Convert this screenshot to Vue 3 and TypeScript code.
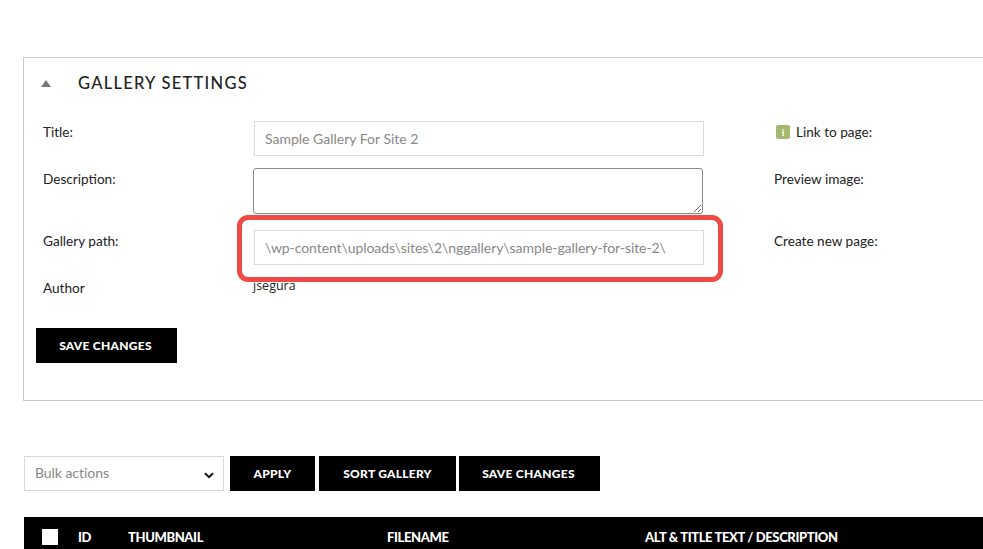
<script setup lang="ts">
const columns = [
  { label: 'ID', width: 50 },
  { label: 'THUMBNAIL', width: 259 },
  { label: 'FILENAME', width: 258 },
  { label: 'ALT & TITLE TEXT / DESCRIPTION', width: 300 },
]
</script>

<template>
  <div class="page">
    <section class="panel">
      <header class="panel-head">
        <svg class="caret" width="10" height="7" viewBox="0 0 10 7"><path d="M5 0 10 7H0Z" fill="#777" /></svg>
        <h2>GALLERY SETTINGS</h2>
      </header>

      <div class="form">
        <label class="lbl lbl-title">Title:</label>
        <div class="field"><input class="txt" value="Sample Gallery For Site 2" /></div>
        <div class="side side-link">
          <span class="info">i</span>
          <span>Link to page:</span>
        </div>

        <label class="lbl lbl-desc">Description:</label>
        <div class="field"><textarea class="area"></textarea></div>
        <div class="side side-preview">Preview image:</div>

        <label class="lbl lbl-path">Gallery path:</label>
        <div class="field path-field">
          <input class="txt path-txt" value="\wp-content\uploads\sites\2\nggallery\sample-gallery-for-site-2\" />
          <span class="callout"></span>
        </div>
        <div class="side side-create">Create new page:</div>

        <label class="lbl lbl-author">Author</label>
        <div class="author">jsegura</div>
      </div>

      <button class="btn btn-save" type="button">SAVE CHANGES</button>
    </section>

    <div class="toolbar">
      <div class="select">
        <span class="select-text">Bulk actions</span>
        <svg class="chev" width="10" height="7" viewBox="0 0 10 7"><path d="M1 1.2 5 5.2 9 1.2" fill="none" stroke="#111" stroke-width="2" /></svg>
      </div>
      <button class="btn btn-apply" type="button">APPLY</button>
      <button class="btn btn-sort" type="button">SORT GALLERY</button>
      <button class="btn btn-save2" type="button">SAVE CHANGES</button>
    </div>

    <div class="thead">
      <span class="check"></span>
      <span v-for="c in columns" :key="c.label" class="col" :style="{ width: c.width + 'px' }">{{ c.label }}</span>
    </div>
  </div>
</template>

<style>
html, body { margin: 0; background: #fff; overflow: hidden; }
</style>

<style scoped>
.page {
  width: 983px;
  height: 549px;
  overflow: hidden;
  padding-top: 57px;
  box-sizing: border-box;
  font-family: Lato, "Liberation Sans", sans-serif;
  color: #222;
}
.panel {
  margin-left: 23px;
  width: 1000px;
  height: 344px;
  box-sizing: border-box;
  border: 1px solid #c9c9c9;
  padding-top: 13px;
}
.panel-head {
  display: flex;
  align-items: center;
  height: 24px;
  padding-left: 17px;
}
.caret { margin-right: 27px; }
.panel-head h2 {
  margin: 0;
  font-size: 16.5px;
  font-weight: 500;
  letter-spacing: 1.25px;
  color: #222;
}
.form {
  display: grid;
  grid-template-columns: 211px 450px 520px;
  grid-template-rows: 35px 46px 35px 24px;
  row-gap: 12px;
  padding-left: 19px;
  margin-top: 26px;
  font-size: 13.6px;
}
.lbl { line-height: 20px; color: #222; }
.lbl-title { margin-top: 1px; }
.lbl-desc { margin-top: 1px; }
.lbl-path { margin-top: 5px; }
.lbl-author { margin-top: 5px; }
.field { position: relative; }
.txt {
  display: block;
  box-sizing: border-box;
  width: 450px;
  height: 35px;
  border: 1px solid #d8dcdc;
  padding: 0 10px;
  font: 14px Lato, sans-serif;
  color: #888;
  outline: none;
  background: #fff;
}
.path-txt { letter-spacing: -0.07px; }
.area {
  display: block;
  box-sizing: border-box;
  width: 450px;
  height: 46px;
  margin-left: -1px;
  border: 1px solid #8a8a8a;
  border-radius: 3px;
  background: #fff;
  outline: none;
  resize: vertical;
}
.path-field { margin-top: 4px; }
.callout {
  position: absolute;
  left: -17px;
  top: -15px;
  width: 486px;
  height: 67px;
  border: 5px solid #ef4a45;
  border-radius: 11px;
  box-sizing: border-box;
  pointer-events: none;
}
.side {
  padding-left: 70px;
  line-height: 20px;
  color: #222;
}
.side-link {
  display: flex;
  align-items: center;
  margin-top: 1px;
  height: 20px;
  padding-left: 72px;
  gap: 6px;
}
.info {
  width: 14px;
  height: 14px;
  border-radius: 2px;
  background: #a3b96f;
  color: #fff;
  font: bold 10px/14px Lato, sans-serif;
  text-align: center;
}
.side-preview { margin-top: 1px; }
.side-create { margin-top: 5px; }
.author {
  grid-column: 2;
  margin-left: -1px;
  margin-top: 3px;
  line-height: 20px;
  color: #222;
  font-family: "Open Sans", sans-serif;
  font-size: 12.5px;
}
.btn {
  display: block;
  box-sizing: border-box;
  height: 35px;
  border: 0;
  padding: 0;
  background: #000;
  color: #fff;
  font: 900 12px Lato, sans-serif;
  letter-spacing: 0.27px;
  text-align: center;
}
.btn-save { margin: 31px 0 0 12px; width: 141px; padding-right: 2px; }
.toolbar {
  display: flex;
  margin: 55px 0 0 24px;
  height: 35px;
}
.select {
  box-sizing: border-box;
  width: 200px;
  height: 35px;
  border: 1px solid #d8d8d8;
  padding: 0 10px;
  display: flex;
  align-items: center;
  justify-content: space-between;
  font-size: 14px;
  color: #888;
  margin-right: 6px;
}
.select-text { margin-top: -2px; letter-spacing: -0.05px; }
.chev { margin: 3px -1px 0 0; }
.btn-apply { width: 85px; margin-right: 4px; }
.btn-sort { width: 137px; margin-right: 3px; }
.btn-save2 { width: 141px; padding-right: 2px; }
.thead {
  display: flex;
  align-items: center;
  margin: 26px 0 0 24px;
  width: 959px;
  height: 40px;
  padding: 0 0 8px 18px;
  box-sizing: border-box;
  background: #000;
  color: #fff;
  font: 900 13px Lato, sans-serif;
  letter-spacing: -0.38px;
}
.check {
  width: 16px;
  height: 16px;
  background: #fff;
  margin-top: 8px;
  margin-right: 20px;
  flex: none;
}
.col { flex: none; margin-top: 8px; white-space: nowrap; }
</style>
